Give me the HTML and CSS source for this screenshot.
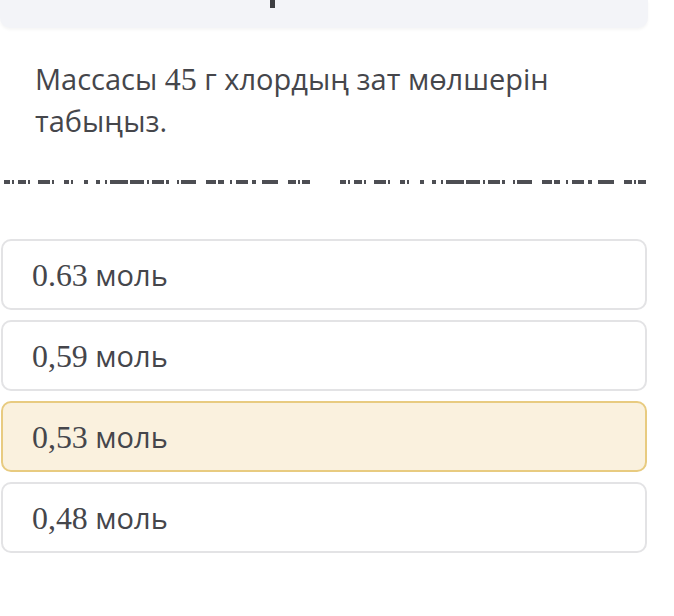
FILE: index.html
```html
<!DOCTYPE html>
<html lang="kk">
<head>
    <meta charset="UTF-8">
    <title>Тест</title>
    <link rel="stylesheet" href="styles.css">
</head>
<body>
    <div class="header-card">
        <span class="header-mark"></span>
    </div>

    <div class="question">
        Массасы <span class="num">45</span> г хлордың зат мөлшерін табыңыз.
    </div>

    <div class="divider">
        <div class="dash-half"></div>
        <div class="dash-half"></div>
    </div>

    <div class="answers">
        <div class="answer"><span class="answer-text"><span class="num">0.63</span> моль</span></div>
        <div class="answer"><span class="answer-text"><span class="num">0,59</span> моль</span></div>
        <div class="answer selected"><span class="answer-text"><span class="num">0,53</span> моль</span></div>
        <div class="answer"><span class="answer-text"><span class="num">0,48</span> моль</span></div>
    </div>
</body>
</html>
```

FILE: styles.css
```css
body {
    margin: 0;
    background-color: #fff;
    font-family: "Open Sans", "Noto Sans", sans-serif;
    color: #45464b;
}
.header-card {
    width: 648px;
    height: 28px;
    background-color: #f3f4f8;
    border-radius: 0 0 10px 10px;
    box-shadow: 0 2px 3px rgba(0, 0, 0, 0.04);
    position: relative;
}
.header-mark {
    position: absolute;
    left: 270px;
    top: 0;
    width: 5px;
    height: 8px;
    background-color: #3d3e42;
}
.num {
    font-family: "Liberation Serif", "DejaVu Serif", serif;
    font-size: 1.1em;
    line-height: 1;
}
.question {
    margin: 30px 0 0 35px;
    width: 590px;
    font-size: 29px;
    line-height: 42px;
}
.divider {
    display: flex;
    justify-content: space-between;
    margin: 38px 0 0 4px;
    width: 642px;
    height: 4px;
}
.dash-half {
    width: 306px;
    height: 4px;
    background-image: linear-gradient(to right,
        #4d4e53 0, #4d4e53 6px, transparent 6px, transparent 8px,
        #4d4e53 8px, #4d4e53 10px, transparent 10px, transparent 14px,
        #4d4e53 14px, #4d4e53 22px, transparent 22px, transparent 24px,
        #4d4e53 24px, #4d4e53 26px, transparent 26px, transparent 34px,
        #4d4e53 34px, #4d4e53 46px, transparent 46px, transparent 48px,
        #4d4e53 48px, #4d4e53 50px, transparent 50px, transparent 60px,
        #4d4e53 60px, #4d4e53 65px, transparent 65px, transparent 67px,
        #4d4e53 67px, #4d4e53 69px, transparent 69px, transparent 80px,
        #4d4e53 80px, #4d4e53 84px, transparent 84px, transparent 92px,
        #4d4e53 92px, #4d4e53 96px, transparent 96px, transparent 101px,
        #4d4e53 101px, #4d4e53 103px, transparent 103px, transparent 106px,
        #4d4e53 106px, #4d4e53 124px, transparent 124px, transparent 126px,
        #4d4e53 126px, #4d4e53 140px, transparent 140px, transparent 143px,
        #4d4e53 143px, #4d4e53 145px, transparent 145px, transparent 148px,
        #4d4e53 148px, #4d4e53 160px, transparent 160px, transparent 162px,
        #4d4e53 162px, #4d4e53 165px, transparent 165px, transparent 173px,
        #4d4e53 173px, #4d4e53 175px, transparent 175px, transparent 177px,
        #4d4e53 177px, #4d4e53 192px, transparent 192px, transparent 202px,
        #4d4e53 202px, #4d4e53 212px, transparent 212px, transparent 214px,
        #4d4e53 214px, #4d4e53 220px, transparent 220px, transparent 226px,
        #4d4e53 226px, #4d4e53 228px, transparent 228px, transparent 232px,
        #4d4e53 232px, #4d4e53 244px, transparent 244px, transparent 248px,
        #4d4e53 248px, #4d4e53 252px, transparent 252px, transparent 258px,
        #4d4e53 258px, #4d4e53 274px, transparent 274px, transparent 284px,
        #4d4e53 284px, #4d4e53 292px, transparent 292px, transparent 294px,
        #4d4e53 294px, #4d4e53 296px, transparent 296px, transparent 298px,
        #4d4e53 298px, #4d4e53 306px);
}
.answers {
    display: flex;
    flex-direction: column;
    gap: 10px;
    margin: 55px 0 0 1px;
    width: 646px;
}
.answer {
    box-sizing: border-box;
    height: 71px;
    padding-left: 29px;
    display: flex;
    align-items: center;
    background-color: #fff;
    border: 2px solid #e3e3e5;
    border-radius: 10px;
}
.answer-text {
    font-size: 29px;
    color: #45464b;
}
.answer.selected {
    background-color: #faf1de;
    border-color: #e8cb80;
}
```
